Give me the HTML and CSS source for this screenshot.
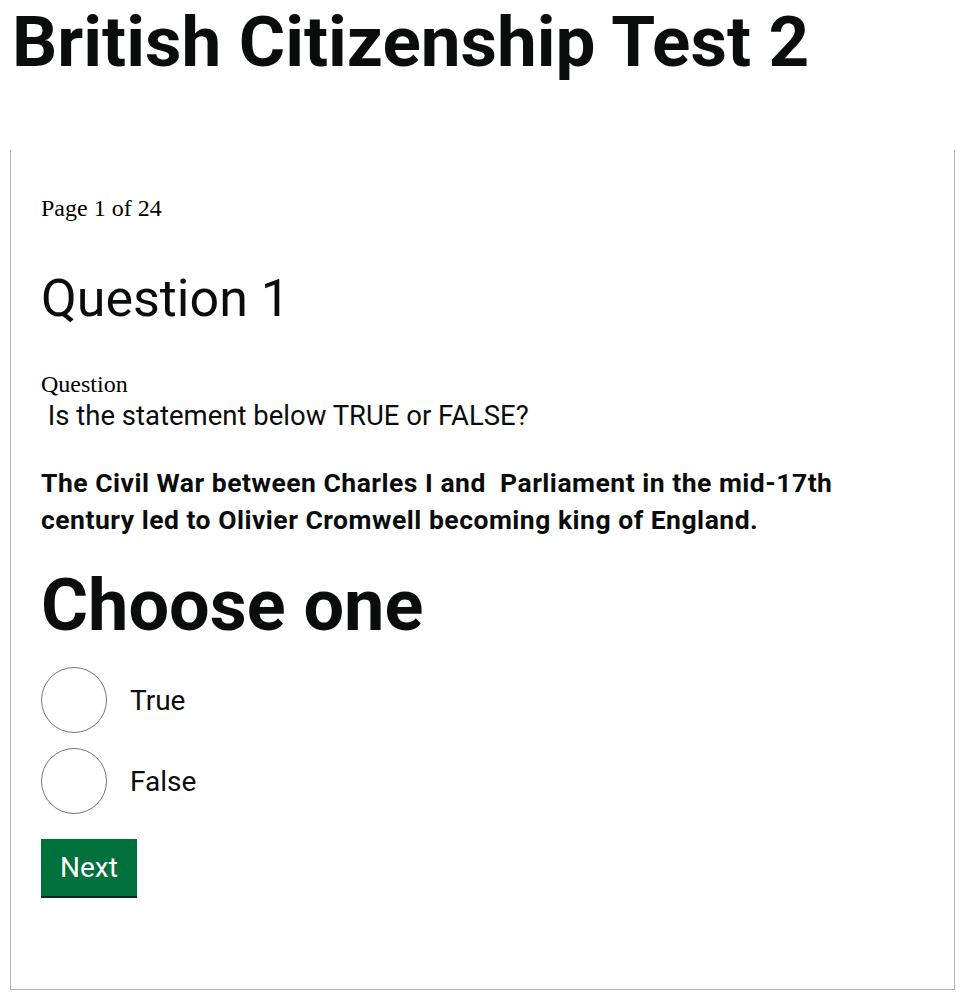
FILE: index.html
```html
<!DOCTYPE html>
<html lang="en">
<head>
    <meta charset="UTF-8">
    <meta name="viewport" content="width=device-width, initial-scale=1.0">
    <title>British Citizenship Test 2</title>
    <link rel="stylesheet" href="styles.css">
</head>
<body>

<h1 class="page-title">British Citizenship Test 2</h1>

<form class="quiz" action="#" method="post">
    <p class="progress">Page 1 of 24</p>

    <h2 class="question-title">Question 1</h2>

    <!-- Question text -->
    <div class="question">
        <span class="question-label">Question</span>
        <p class="prompt">&nbsp;Is the statement below TRUE or FALSE?</p>
        <p class="statement">The Civil War between Charles I and &nbsp;Parliament in the mid-17th century led to Olivier Cromwell becoming king of England.</p>
    </div>

    <!-- Answers -->
    <fieldset class="answers">
        <legend>Choose one</legend>
        <div class="radios">
            <div class="radio-item">
                <input type="radio" id="answer-true" name="answer" value="true">
                <label for="answer-true">True</label>
            </div>
            <div class="radio-item">
                <input type="radio" id="answer-false" name="answer" value="false">
                <label for="answer-false">False</label>
            </div>
        </div>
    </fieldset>

    <button type="submit" class="next-button">Next</button>
</form>

</body>
</html>
```

FILE: styles.css
```css
body {
    margin: 0 6px 0 10px;
    background-color: #fff;
    color: #0b0c0c;
    font-family: Roboto, "Noto Sans", sans-serif;
}
.page-title {
    font-size: 71px;
    font-weight: 700;
    line-height: 83px;
    margin: 0 0 67px 0;
    padding-left: 2px;
    white-space: nowrap;
}
.quiz {
    border: 1px solid #b1b4b6;
    border-top: none;
    padding: 44px 30px 93px 30px;
}
.progress {
    font-family: "Liberation Serif", serif;
    font-size: 24px;
    line-height: 28px;
    color: #000;
    margin: 0 0 49px 0;
}
.question-title {
    font-size: 52px;
    font-weight: 400;
    line-height: 56px;
    margin: 0 0 43px 0;
}
.question-label {
    display: block;
    font-family: "Liberation Serif", serif;
    font-size: 24px;
    line-height: 28px;
    color: #000;
}
.prompt {
    font-size: 27.5px;
    line-height: 32px;
    margin: 2px 0 32px 0;
}
.statement {
    font-size: 26.5px;
    font-weight: 700;
    letter-spacing: 0.5px;
    line-height: 37px;
    margin: 0 0 28px 0;
    max-width: 850px;
}
.answers {
    border: none;
    margin: 0;
    padding: 0;
}
.answers legend {
    font-size: 72px;
    font-weight: 700;
    line-height: 80px;
    padding: 0;
}
.radios {
    padding-top: 21px;
}
.radio-item {
    display: flex;
    align-items: center;
    margin-bottom: 15px;
}
.radio-item input[type="radio"] {
    appearance: none;
    width: 66px;
    height: 66px;
    margin: 0;
    border: 1.5px solid #767676;
    border-radius: 50%;
    box-sizing: border-box;
    cursor: pointer;
}
.radio-item label {
    font-size: 28px;
    line-height: 33px;
    padding-left: 23px;
    cursor: pointer;
}
.next-button {
    font-family: inherit;
    font-size: 28px;
    line-height: 33px;
    color: #fff;
    background-color: #00703c;
    border: none;
    border-radius: 0;
    box-shadow: 0 2px 0 #002d18;
    padding: 12px 19px;
    margin-top: 10px;
    cursor: pointer;
}
```
